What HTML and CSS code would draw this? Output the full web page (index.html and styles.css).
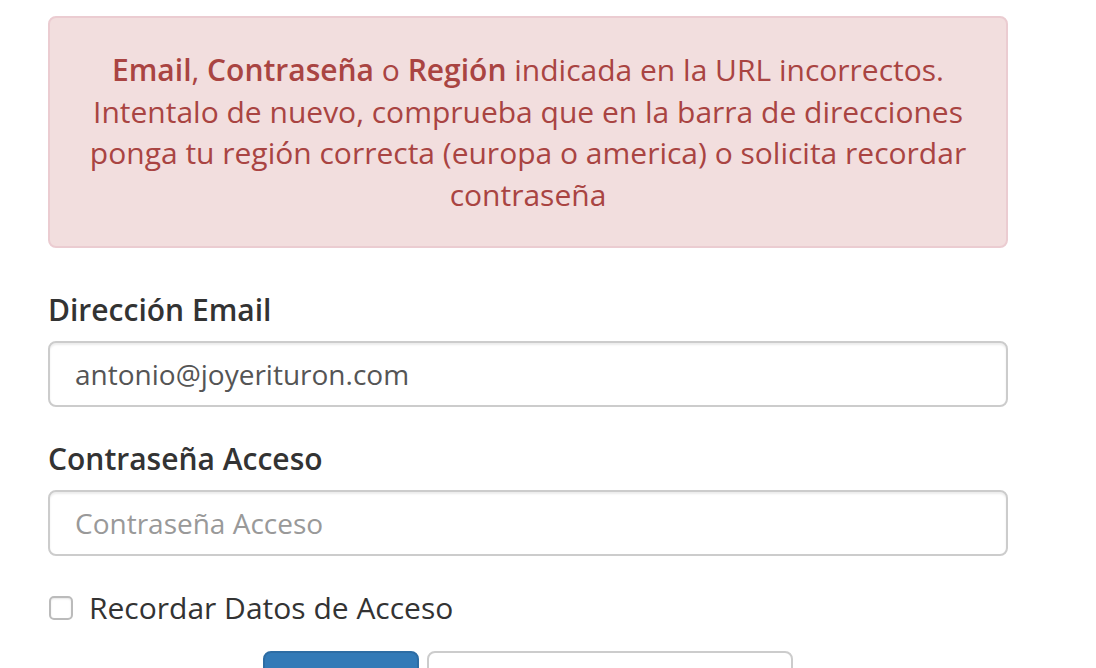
FILE: index.html
```html
<!DOCTYPE html>
<html lang="es">
<head>
<meta charset="utf-8">
<link rel="stylesheet" href="styles.css">
</head>
<body>
<div class="container">
  <div class="alert">
    <strong>Email</strong>, <strong>Contraseña</strong> o <strong>Región</strong> indicada en la URL incorrectos. Intentalo de nuevo, comprueba que en la barra de direcciones ponga tu región correcta (europa o america) o solicita recordar contraseña
  </div>
  <form class="form">
    <div class="group">
      <label class="label">Dirección Email</label>
      <input class="input" type="text" value="antonio@joyerituron.com">
    </div>
    <div class="group">
      <label class="label">Contraseña Acceso</label>
      <input class="input" type="password" placeholder="Contraseña Acceso">
    </div>
    <label class="check"><span class="box"></span>Recordar Datos de Acceso</label>
    <div class="buttons">
      <button type="button" class="btn primary">Acceder</button>
      <button type="button" class="btn default">Recordar Contraseña</button>
    </div>
  </form>
</div>
</body>
</html>
```
FILE: styles.css
```css
html, body { margin: 0; padding: 0; background: #fff; }
body { font-family: "Open Sans", "Liberation Sans", sans-serif; color: #333; overflow: hidden; height: 668px; }
.container { width: 960px; margin-left: 48px; padding-top: 16px; }
.alert {
  background: #f2dede; border: 2px solid #ebccd1; border-radius: 8px;
  color: #a94442; text-align: center; font-size: 30px; line-height: 41.5px;
  padding: 31px 28px 31px; box-sizing: border-box;
}
.alert strong { font-weight: 600; }
.form { margin-top: 41px; }
.group { margin-bottom: 31px; }
.label { display: block; font-weight: 600; font-size: 30px; line-height: 42px; margin-bottom: 10px; }
.input {
  display: block; width: 100%; box-sizing: border-box; height: 66px;
  border: 2px solid #ccc; border-radius: 8px; padding: 0 25px;
  font-family: inherit; font-size: 28px; color: #555;
  box-shadow: inset 0 2px 2px rgba(0,0,0,.075); outline: none;
}
.input::placeholder { color: #999; }
.check { display: flex; align-items: center; font-size: 30px; line-height: 42px; }
.box { width: 20px; height: 20px; border: 2px solid #bbb; border-radius: 5px; margin: 0 16px 0 1px; box-shadow: inset 0 1px 2px rgba(0,0,0,.1); }
.buttons { display: flex; gap: 8px; margin-top: 22px; padding-left: 215px; }
.btn { height: 70px; border-radius: 8px; font-family: inherit; font-size: 29px; padding: 0 30px; }
.primary { width: 156px; background: #337ab7; border: 2px solid #2e6da4; color: #fff; }
.default { width: 366px; background: #fff; border: 2px solid #ccc; color: #333; }
```
